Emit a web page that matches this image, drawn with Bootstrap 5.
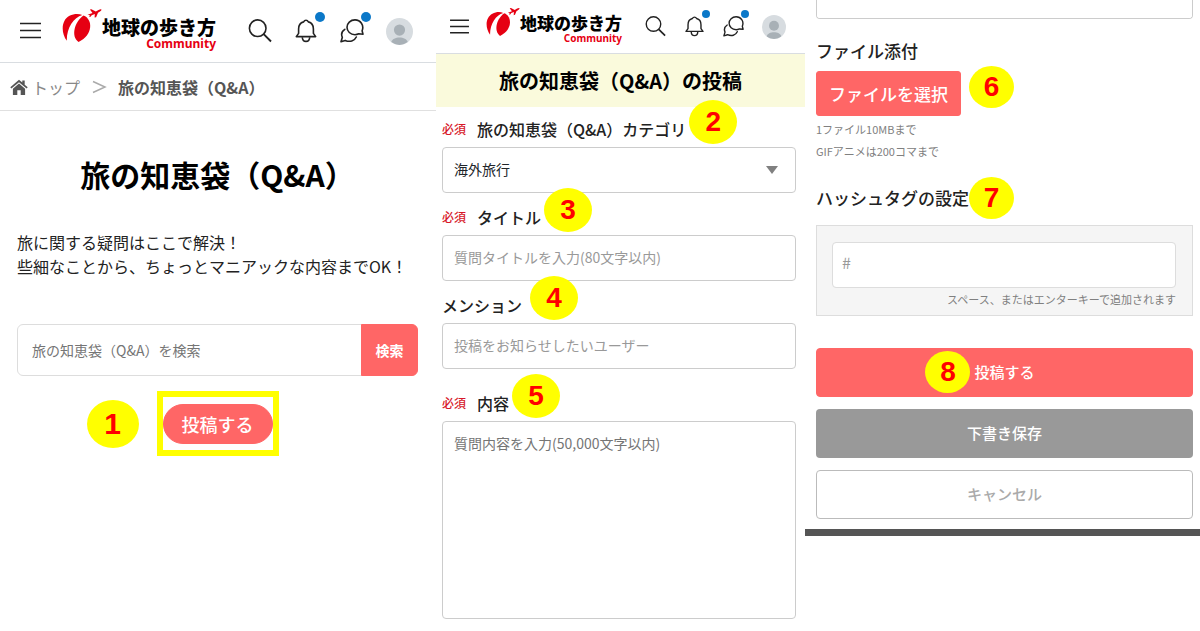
<!DOCTYPE html>
<html lang="ja">
<head>
<meta charset="utf-8">
<meta name="viewport" content="width=device-width, initial-scale=1">
<title>旅の知恵袋（Q&amp;A）の投稿方法</title>
<link href="https://cdn.jsdelivr.net/npm/bootstrap@5.3.0/dist/css/bootstrap.min.css" rel="stylesheet">
<style>
  :root { --coral: #ff6666; --line: #cccccc; --ink: #222222; }
  body { font-family: "Noto Sans CJK JP", sans-serif; color: var(--ink); line-height: 24px; background: #fff; }
  .guide { display: grid; grid-template-columns: 436fr 369fr 395fr; }
  .guide > * { min-width: 0; }

  /* site header */
  .topbar { height: 63px; padding: 0 23px 0 20px; border-bottom: 1px solid #d9dde1; }
  .topbar svg { display: block; flex: none; }
  .menu-btn { border: 0; padding: 0; background: none; width: 21px; margin-right: 21px; }
  .tools { gap: 22px; }
  .tool { width: 24px; color: var(--ink); }
  .tool-face { width: 27px; }
  .tool svg, .tool-face svg, .menu-btn svg { width: 100%; }
  .alert-dot { position: absolute; width: 10px; height: 10px; right: -7px; top: -7px; border-radius: 50%; background: #0b78c8; }
  .logo-mark { width: 40px; margin-bottom: 10px; }
  .logo-text { padding-top: 6px; font-size: 19px; font-weight: 900; line-height: 20px; color: #000; }
  .logo-sub { font-family: "Noto Sans", sans-serif; font-size: 12px; font-weight: 700; line-height: 14px; color: #e60012; }
  .topbar-sm { height: 54px; padding: 0 19px 0 14px; }
  .topbar-sm .menu-btn { width: 19px; margin-right: 17px; }
  .topbar-sm .tools { gap: 18px; }
  .topbar-sm .tool { width: 21px; }
  .topbar-sm .tool-face { width: 24px; }
  .topbar-sm .logo-mark { width: 34px; margin-bottom: 8px; }
  .topbar-sm .logo-text { font-size: 17px; line-height: 18px; padding-top: 5px; }
  .topbar-sm .logo-sub { font-size: 10px; line-height: 12px; }
  .topbar-sm .alert-dot { width: 8px; height: 8px; right: -5px; top: -6px; }

  /* step numbers */
  .step { position: absolute; top: 50%; left: 100%; transform: translateY(-50%); width: 48px; height: 44px; border-radius: 50%;
    background: #ff0; color: #f00; font: 700 28px/44px "Liberation Sans", sans-serif; text-align: center; }
  .step-before { left: auto; right: 100%; }
  .step-lg { width: 52px; height: 48px; line-height: 48px; font-size: 30px; margin-right: 24px; }
  .step-sm { width: 45px; height: 42px; line-height: 42px; }
  .step-raised { margin: -7px 0 0 3px; }

  /* first screen */
  .crumbs { height: 48px; padding: 0 10px; border-bottom: 1px solid #e0e0e0; }
  .crumbs a { color: #888; }
  .crumbs strong { color: #555; font-weight: 700; }
  .crumb-sep { margin: 0 9px; flex: none; }
  .intro { padding: 0 18px 0 17px; }
  .intro h1 { font-size: 30px; line-height: 40px; font-weight: 700; color: #000; margin: 43px 0 36px; }
  .search { margin-top: 46px; height: 52px; }
  .search .form-control { border-color: #ddd; padding: 0 14px; font-size: 14px; }
  .search .btn { width: 57px; padding: 0; font-size: 14px; font-weight: 700; }
  .form-control, .form-control:focus { color: var(--ink); box-shadow: none; }
  .btn-coral { --bs-btn-bg: var(--coral); --bs-btn-color: #fff; --bs-btn-border-color: var(--coral);
    --bs-btn-hover-bg: #f25555; --bs-btn-hover-color: #fff; --bs-btn-hover-border-color: #f25555; }
  .post-frame { border: 6px solid #ff0; padding: 7px 0 6px; margin-top: 15px; }
  .post-frame .btn { width: 110px; height: 40px; padding: 0; font-size: 18px; font-weight: 500; }

  /* posting form */
  .page-title { background: #fafadc; font-size: 20px; line-height: 29px; padding: 12px 0; font-weight: 700; color: #000; }
  .post-form { padding: 10px 9px 12px 6px; }
  .field { margin-bottom: 12px; }
  .field-wide { margin-bottom: 22px; }
  .caption { display: flex; align-items: center; margin-bottom: 6px; font-size: 16px; font-weight: 500; }
  .must { font-size: 12px; color: #d7182a; width: 35px; flex: none; }
  .box, .box:focus { border: 1px solid var(--line); border-radius: 4px; font-size: 14px; padding: 0 11px 2px; height: 46px; }
  .box::placeholder { color: #999; }
  .dark-hint::placeholder, .search .form-control::placeholder { color: #757575; opacity: 1; }
  .box-area { height: 198px; padding: 11px; resize: none; }
  .picker { padding-right: 40px; background: #fff url("data:image/svg+xml,%3Csvg xmlns='http://www.w3.org/2000/svg' viewBox='0 0 12 8'%3E%3Cpath fill='%23808080' d='M0 0h12L6 8z'/%3E%3C/svg%3E") no-repeat right 17px center / 12px 8px; }

  /* lower part of the form */
  .rest { padding: 0 7px 10px 11px; border-bottom: 7px solid #555; }
  .rest .tail { display: block; height: 19px; min-height: 0; border-top: 0; border-radius: 0 0 4px 4px; padding: 0; resize: none; }
  .rest h2 { font-size: 17px; line-height: 24px; font-weight: 500; margin: 0; }
  .file-btn { width: 145px; height: 45px; padding: 0; font-size: 17px; font-weight: 500; --bs-btn-border-radius: 3px; }
  .notes { font-size: 11px; line-height: 22px; color: #808080; }
  .file-notes { padding-top: 2px; }
  .tags { background: #f5f5f5; border: 1px solid #ddd; padding: 16px 16px 5px 15px; margin-top: 15px; }
  .tags .box { border-color: #ddd; padding: 0 9px 6px; font-size: 16px; }
  .actions { margin-top: 32px; gap: 12px; }
  .actions .btn { height: 49px; padding: 0; font-size: 15px; font-weight: 500; --bs-btn-border-radius: 4px; }
  .btn-draft { --bs-btn-bg: #999; --bs-btn-color: #fff; --bs-btn-hover-bg: #888; --bs-btn-hover-color: #fff; }
  .btn-cancel { --bs-btn-color: #aaa; --bs-btn-border-color: #bbb; --bs-btn-bg: #fff; --bs-btn-hover-color: #888; --bs-btn-hover-border-color: #999; }
</style>
</head>
<body>
<svg class="d-none" xmlns="http://www.w3.org/2000/svg">
  <symbol id="i-menu" viewBox="0 0 21 20"><path d="M0 2.500h21M0 9.500h21M0 16.500h21" stroke="#222" stroke-width="1.7"/></symbol>
  <symbol id="i-search" viewBox="0 0 24 24"><g fill="none" stroke="currentColor" stroke-width="1.6"><circle cx="9.7" cy="9.2" r="8.3"/><path d="M15.700 15.200l7.300 7.300" stroke-width="1.9"/></g></symbol>
  <symbol id="i-bell" viewBox="0 0 24 24"><g fill="none" stroke="currentColor" stroke-width="1.6" stroke-linejoin="round"><path d="M2.300 17.600h19.400l-2.300-3.200V10c0-4-2.200-6.400-5-7.100-1.200-2.200-3.600-2.200-4.800 0C6.800 3.600 4.600 6 4.600 10v4.400z"/><path d="M8.300 18.200c.2 5.600 7.200 5.600 7.400 0"/></g></symbol>
  <symbol id="i-chat" viewBox="0 0 24 24"><g fill="none" stroke="currentColor" stroke-width="1.6" stroke-linejoin="round" stroke-linecap="round"><path d="M23 15.200l-.9-3.400C24.400 6 20.400.9 15 .9c-4.600 0-8 3.300-8 7.400s3.400 7.400 8 7.400c1.500 0 2.600-.3 3.800-.9z"/><path d="M4.800 10.300c-3.200 2.100-3.800 5-2.500 8.100L1 22.700l4.200-1.300c4.600 2 9.300.6 11.100-3.400"/></g></symbol>
  <symbol id="i-face" viewBox="0 0 28 28"><circle cx="14" cy="14" r="14" fill="#d7dce0"/><circle cx="14" cy="12.500" r="5.800" fill="#a8b0b6"/><path d="M5.500 25c1.200-6.500 15.800-6.500 17 0a14 14 0 0 1-17 0z" fill="#a8b0b6"/></symbol>
  <symbol id="i-logo" viewBox="0 0 40 36"><g fill="#e60012"><path d="M4.800 32.800C-1.500 24-.5 12 7.500 7.800 12 5.400 17 5.400 20.300 7 11.500 9.500 4.500 20 4.800 32.800z"/><path d="M21.500 7.500c9.500 3.500 9.800 19.500-5 26.500C8.500 28.500 12.500 13.500 21.500 7.500z"/><path d="M25.500 6.800l5-1.700-2.600-3.600 1.500-.3 4.400 2.400C36 2.200 38.500.8 39.300 1.400c.9.700-1.400 2.200-3.300 3.400l-1.900 4.400-1.500.4.200-3.600-3.100 1.200-1.500 1.800-.8-.1.300-1.900z"/></g></symbol>
  <symbol id="i-home" viewBox="0 0 18 16"><path fill="#555" d="M9 .8L.3 8.300l1.100 1.300L9 3.200l7.600 6.400 1.100-1.300-3-2.600V1.500h-2.400v2.100zM9 4.600L2.900 9.700V16h4.400v-4.700h3.400V16h4.400V9.700z"/></symbol>
</svg>

<main class="guide">
  <section>
    <header class="topbar d-flex align-items-center">
      <button class="menu-btn" type="button" aria-label="メニュー"><svg height="20"><use href="#i-menu"/></svg></button>
      <a class="d-flex align-items-center text-decoration-none" href="#">
        <svg class="logo-mark" viewBox="0 0 40 36"><use href="#i-logo"/></svg>
        <span class="logo-text">地球の歩き方<span class="logo-sub d-block text-end">Community</span></span>
      </a>
      <nav class="tools d-flex align-items-center ms-auto">
        <a class="tool" href="#" aria-label="検索"><svg height="24"><use href="#i-search"/></svg></a>
        <a class="tool position-relative" href="#" aria-label="お知らせ"><svg height="24"><use href="#i-bell"/></svg><span class="alert-dot"></span></a>
        <a class="tool position-relative" href="#" aria-label="メッセージ"><svg height="24"><use href="#i-chat"/></svg><span class="alert-dot"></span></a>
        <a class="tool-face" href="#" aria-label="マイページ"><svg height="27"><use href="#i-face"/></svg></a>
      </nav>
    </header>
    <nav class="crumbs d-flex align-items-center" aria-label="パンくず">
      <a class="d-flex align-items-center text-decoration-none" href="#"><svg class="me-1" width="18" height="16"><use href="#i-home"/></svg>トップ</a>
      <svg class="crumb-sep" width="20" height="16" viewBox="0 0 20 16" fill="none" stroke="#aaa" stroke-width="1.5"><path d="M4 2.500l12 5.500-12 5.500"/></svg>
      <strong>旅の知恵袋（Q&amp;A）</strong>
    </nav>
    <div class="intro">
      <h1 class="text-center">旅の知恵袋（Q&amp;A）</h1>
      <p class="mb-0">旅に関する疑問はここで解決！<br>些細なことから、ちょっとマニアックな内容までOK！</p>
      <form class="search input-group flex-nowrap">
        <input class="form-control" type="search" placeholder="旅の知恵袋（Q&amp;A）を検索" aria-label="旅の知恵袋（Q&amp;A）を検索">
        <button class="btn btn-coral" type="button">検索</button>
      </form>
      <div class="d-flex justify-content-center">
        <div class="post-frame position-relative">
          <span class="step step-before step-lg">1</span>
          <button class="btn btn-coral rounded-pill d-block" type="button">投稿する</button>
        </div>
      </div>
    </div>
  </section>

  <section>
    <header class="topbar topbar-sm d-flex align-items-center">
      <button class="menu-btn" type="button" aria-label="メニュー"><svg height="18"><use href="#i-menu"/></svg></button>
      <a class="d-flex align-items-center text-decoration-none" href="#">
        <svg class="logo-mark" viewBox="0 0 40 36"><use href="#i-logo"/></svg>
        <span class="logo-text">地球の歩き方<span class="logo-sub d-block text-end">Community</span></span>
      </a>
      <nav class="tools d-flex align-items-center ms-auto">
        <a class="tool" href="#" aria-label="検索"><svg height="21"><use href="#i-search"/></svg></a>
        <a class="tool position-relative" href="#" aria-label="お知らせ"><svg height="21"><use href="#i-bell"/></svg><span class="alert-dot"></span></a>
        <a class="tool position-relative" href="#" aria-label="メッセージ"><svg height="21"><use href="#i-chat"/></svg><span class="alert-dot"></span></a>
        <a class="tool-face" href="#" aria-label="マイページ"><svg height="24"><use href="#i-face"/></svg></a>
      </nav>
    </header>
    <h1 class="page-title text-center mb-0">旅の知恵袋（Q&amp;A）の投稿</h1>
    <form class="post-form">
      <div class="field">
        <label class="caption" for="category"><span class="must">必須</span><span class="position-relative">旅の知恵袋（Q&amp;A）カテゴリ<span class="step step-raised">2</span></span></label>
        <select class="form-select box picker" id="category"><option>海外旅行</option><option>国内旅行</option></select>
      </div>
      <div class="field">
        <label class="caption" for="title"><span class="must">必須</span><span class="position-relative">タイトル<span class="step step-raised">3</span></span></label>
        <input class="form-control box" id="title" type="text" placeholder="質問タイトルを入力(80文字以内)">
      </div>
      <div class="field field-wide">
        <label class="caption" for="mention"><span class="position-relative">メンション<span class="step step-raised ms-2">4</span></span></label>
        <input class="form-control box" id="mention" type="text" placeholder="投稿をお知らせしたいユーザー">
      </div>
      <div>
        <label class="caption" for="content"><span class="must">必須</span><span class="position-relative">内容<span class="step step-raised">5</span></span></label>
        <textarea class="form-control box box-area dark-hint" id="content" placeholder="質問内容を入力(50,000文字以内)"></textarea>
      </div>
    </form>
  </section>

  <section>
    <form class="rest">
      <textarea class="form-control box tail" aria-label="内容の続き"></textarea>
      <h2 class="mt-3 pt-1">ファイル添付</h2>
      <div class="d-flex mt-2">
        <div class="position-relative">
          <button class="btn btn-coral file-btn d-block" type="button">ファイルを選択</button>
          <span class="step step-sm step-raised ms-2">6</span>
        </div>
      </div>
      <p class="notes file-notes mb-0">1ファイル10MBまで<br>GIFアニメは200コマまで</p>
      <h2 class="mt-4"><label class="position-relative" for="tag">ハッシュタグの設定<span class="step step-sm">7</span></label></h2>
      <div class="tags">
        <input class="form-control box" id="tag" type="text" placeholder="#">
        <p class="notes text-end mb-0">スペース、またはエンターキーで追加されます</p>
      </div>
      <div class="actions d-grid">
        <button class="btn btn-coral" type="button"><span class="position-relative">投稿する<span class="step step-sm step-before me-1">8</span></span></button>
        <button class="btn btn-draft" type="button">下書き保存</button>
        <button class="btn btn-cancel" type="button">キャンセル</button>
      </div>
    </form>
  </section>
</main>
<script src="https://cdn.jsdelivr.net/npm/bootstrap@5.3.0/dist/js/bootstrap.bundle.min.js"></script>
</body>
</html>
